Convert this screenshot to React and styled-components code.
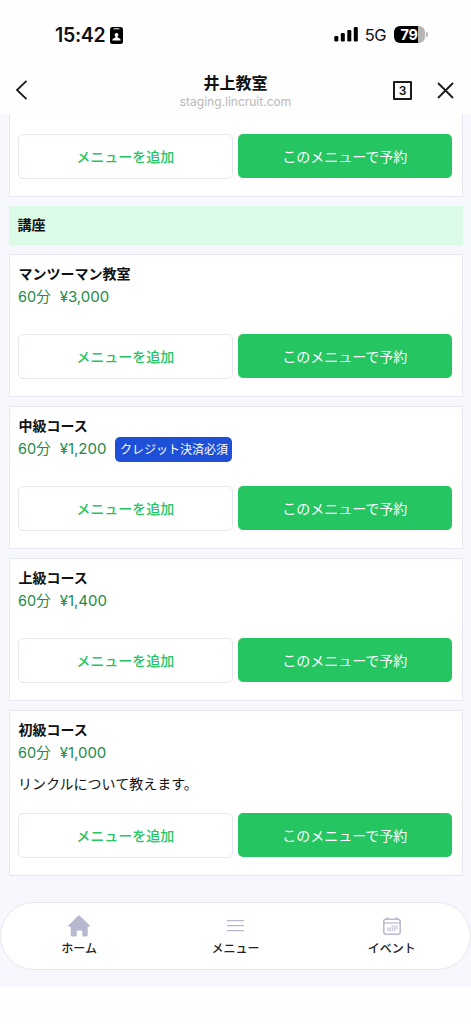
import styled, {createGlobalStyle} from 'styled-components';

const GlobalStyle = createGlobalStyle`
    * {
        box-sizing: border-box;
    }

    body {
        margin: 0;
        background-color: #fff;
        color: #111;
        font-family: Inter, 'Noto Sans CJK JP', sans-serif;
        -webkit-font-smoothing: antialiased;
    }

    h1, h2, h3, p {
        margin: 0;
    }

    button {
        font-family: inherit;
        cursor: pointer;
    }

    svg {
        display: block;
    }
`

const Screen = styled.div`
    display: flex;
    flex-direction: column;
    width: 471px;
    height: 1024px;
    overflow: hidden;
    background-color: #fefefe;
`

const StatusBar = styled.div`
    display: flex;
    align-items: center;
    justify-content: space-between;
    height: 68px;
    padding: 2px 43px 0 55px;
`

const StatusGroup = styled.div`
    display: flex;
    align-items: center;
    gap: ${props => props.$gap};
`

const Time = styled.span`
    font-size: 19.5px;
    font-weight: 600;
    line-height: 24px;
    letter-spacing: -0.3px;
`

const Network = styled.span`
    font-size: 16.5px;
    line-height: 24px;
    letter-spacing: -0.5px;
    margin-right: 1px;
`

const Battery = styled.div`
    display: flex;
    align-items: center;
    gap: 1px;
    margin-top: -1px;
`

const BatteryBody = styled.div`
    display: flex;
    align-items: center;
    justify-content: center;
    width: 31px;
    height: 17px;
    padding-right: 1px;
    border-radius: 6px;
    background: linear-gradient(to right, #000 79%, #b5b5b5 79%);
    color: #fff;
    font-size: 14.5px;
    font-weight: 700;
    line-height: 17px;
    letter-spacing: -0.4px;
`

const BatteryTip = styled.div`
    width: 2px;
    height: 5px;
    border-radius: 0 2px 2px 0;
    background-color: #b5b5b5;
`

const Header = styled.header`
    display: grid;
    grid-template-columns: 88px 1fr 88px;
    height: 46px;
`

const HeaderSide = styled.div`
    display: flex;
    align-items: center;
    justify-content: ${props => props.$end ? 'flex-end' : 'flex-start'};
    gap: 25px;
    padding: ${props => props.$end ? '0 17px 2px 0' : '0 0 2px 15px'};
`

const HeaderTitle = styled.div`
    text-align: center;
    padding-top: 4px;
`

const Title = styled.h1`
    font-size: 16px;
    font-weight: 700;
    line-height: 23px;
`

const Url = styled.p`
    color: #b9b9b9;
    font-size: 12px;
    line-height: 14px;
`

const TabCount = styled.div`
    width: 19px;
    height: 19px;
    border: 2px solid #1a1a1a;
    border-radius: 1px;
    font-size: 12px;
    font-weight: 600;
    line-height: 15px;
    text-align: center;
`

const Content = styled.main`
    display: flex;
    flex-direction: column;
    gap: 9px;
    height: 873px;
    padding: 0 8.5px 0 9px;
    background-color: #f7f8fd;
`

const Card = styled.section`
    display: flex;
    flex-direction: column;
    flex: none;
    height: ${props => props.$height};
    padding: 10px 9.5px 17px 8px;
    border: 1.5px solid #e6e7f0;
    border-top-width: ${props => props.$cut ? 0 : '1.5px'};
    background-color: #fff;
`

const Category = styled.h2`
    flex: none;
    height: 39px;
    padding-left: 8.5px;
    background-color: #dcfbe7;
    font-size: 14px;
    font-weight: 700;
    line-height: 38px;
`

const CardTitle = styled.h3`
    padding-left: 0.5px;
    font-size: 14px;
    font-weight: 700;
    line-height: 18px;
`

const Info = styled.div`
    display: flex;
    align-items: center;
    gap: 9px;
    height: 25px;
    margin-top: 2px;
    color: #238a46;
    font-size: 14.5px;
    white-space: nowrap;
`

const Duration = styled.span`
    line-height: 21px;
    padding-bottom: 2px;
`

const Price = styled.span`
    font-size: 15px;
    line-height: 21px;
    padding-bottom: 2px;
`

const Badge = styled.span`
    height: 25px;
    padding: 0 4.5px;
    border-radius: 5px;
    background-color: #1d4fd7;
    color: #fff;
    font-size: 12px;
    line-height: 25px;
`

const Description = styled.p`
    margin-top: 8px;
    font-size: 14px;
    line-height: 20px;
`

const Actions = styled.div`
    display: grid;
    grid-template-columns: 1fr 1fr;
    align-items: start;
    gap: 5px;
    margin-top: auto;
`

const Button = styled.button`
    height: ${props => props.$primary ? '44px' : '45px'};
    padding: 0 0 ${props => props.$primary ? '1px' : '2px'};
    border: ${props => props.$primary ? 'none' : '1.5px solid #e6e7f0'};
    border-radius: 5px;
    background-color: ${props => props.$primary ? '#25c561' : '#fff'};
    color: ${props => props.$primary ? '#fff' : '#25c561'};
    font-size: 14px;
    font-weight: ${props => props.$primary ? 400 : 500};
`

const Nav = styled.nav`
    display: grid;
    grid-template-columns: repeat(3, 1fr);
    flex: none;
    height: 68px;
    margin: 17px -8.5px 0 -9px;
    border: 1.5px solid #e6e7f0;
    border-radius: 34px;
    background-color: #fff;
`

const NavItem = styled.div`
    display: flex;
    flex-direction: column;
    align-items: center;
    padding-top: 11px;
    color: #222;
    font-size: 12px;
    font-weight: 500;
    line-height: 16px;
`

const NavIcon = styled.div`
    display: flex;
    align-items: center;
    justify-content: center;
    height: 23px;
    margin-bottom: 4px;
    color: #b6b8d0;
`

const menus = [
    {id: 1, name: 'マンツーマン教室', price: '¥3,000'},
    {id: 2, name: '中級コース', price: '¥1,200', badge: 'クレジット決済必須'},
    {id: 3, name: '上級コース', price: '¥1,400'},
    {id: 4, name: '初級コース', price: '¥1,000', text: 'リンクルについて教えます。'},
];

const IdIcon = () => (
    <svg width="13" height="17" viewBox="0 0 13 17">
        <rect width="13" height="17" rx="2.5" fill="#000" />
        <path d="M4 1.8h5" stroke="#fff" strokeWidth="1" strokeLinecap="round" />
        <circle cx="6.5" cy="7.8" r="1.9" fill="#fff" />
        <path d="M5.5 8.5h2v2c1.8.4 3 1.3 3.2 2.9H2.3c.2-1.6 1.4-2.5 3.2-2.9z" fill="#fff" />
    </svg>
)

const SignalIcon = () => (
    <svg width="24" height="16" viewBox="0 0 24 16">
        <rect x="0.3" y="9" width="4" height="5.5" rx="1.2" />
        <rect x="6.8" y="6" width="4" height="8.5" rx="1.2" />
        <rect x="13.3" y="3" width="4" height="11.5" rx="1.2" />
        <rect x="19.8" y="0" width="4" height="14.5" rx="1.2" />
    </svg>
)

const BackIcon = () => (
    <svg width="13" height="20" viewBox="0 0 13 20" fill="none" stroke="#1a1a1a" strokeWidth="1.8">
        <path d="M11.5 0.8L2 10l9.5 9.2" />
    </svg>
)

const CloseIcon = () => (
    <svg width="17" height="17" viewBox="0 0 17 17" fill="none" stroke="#1a1a1a" strokeWidth="1.8">
        <path d="M1 1l15 15M16 1L1 16" />
    </svg>
)

const HomeIcon = () => (
    <svg width="22" height="22" viewBox="0 0 22 22" fill="currentColor">
        <path d="M10.2.8a1.2 1.2 0 0 1 1.6 0l9.7 9.5c.6.7.2 1.5-.6 1.5h-1.2v8c0 1.1-.6 1.7-1.7 1.7h-2.7c-.6 0-1-.4-1-1v-4c0-.7-.4-1.1-1.1-1.1H9.800c-.7 0-1.100.4-1.100 1.100v4c0 .6-.4 1-1 1H4.500c-1.100 0-1.700-.6-1.700-1.700v-8H1.100c-.8 0-1.200-.8-.6-1.500z" />
    </svg>
)

const MenuIcon = () => (
    <svg width="17" height="12" viewBox="0 0 17 12" fill="none" stroke="currentColor" strokeWidth="1.3">
        <path d="M0 0.7h17M0 5.7h17M0 10.7h17" />
    </svg>
)

const CalendarIcon = () => (
    <svg width="18" height="18" viewBox="0 0 18 18" fill="none" stroke="currentColor">
        <rect x="0.8" y="2.3" width="16.4" height="14.9" rx="2.2" strokeWidth="1.5" />
        <path d="M1 6h16" strokeWidth="1.2" />
        <path d="M4.5 0v3M13.5 0v3" strokeWidth="1.3" />
        <path d="M5 10.5v4M7.2 10.5v4M9.4 8.5v6M11.6 8.5v6M13.8 8.5v4" strokeWidth="1.5" strokeDasharray="1.7 .3" opacity="0.8" />
    </svg>
)

const MenuActions = () => (
    <Actions>
        <Button type="button">メニューを追加</Button>
        <Button type="button" $primary>このメニューで予約</Button>
    </Actions>
)

const MenuCard = ({menu}) => (
    <Card $height={menu.text ? '166px' : '143px'}>
        <CardTitle>{menu.name}</CardTitle>
        <Info>
            <Duration>60分</Duration>
            <Price>{menu.price}</Price>
            {menu.badge && <Badge>{menu.badge}</Badge>}
        </Info>
        {menu.text && <Description>{menu.text}</Description>}
        <MenuActions />
    </Card>
)

const App = () => {
    return(
        <>
            <GlobalStyle />
            <Screen>
                <StatusBar>
                    <StatusGroup $gap="5px">
                        <Time>15:42</Time>
                        <IdIcon />
                    </StatusGroup>
                    <StatusGroup $gap="7px">
                        <SignalIcon />
                        <Network>5G</Network>
                        <Battery>
                            <BatteryBody>79</BatteryBody>
                            <BatteryTip />
                        </Battery>
                    </StatusGroup>
                </StatusBar>
                <Header>
                    <HeaderSide><BackIcon /></HeaderSide>
                    <HeaderTitle>
                        <Title>井上教室</Title>
                        <Url>staging.lincruit.com</Url>
                    </HeaderTitle>
                    <HeaderSide $end>
                        <TabCount>3</TabCount>
                        <CloseIcon />
                    </HeaderSide>
                </Header>
                <Content>
                    <Card $height="83px" $cut>
                        <MenuActions />
                    </Card>
                    <Category>講座</Category>
                    {menus.map(menu => <MenuCard key={menu.id} menu={menu} />)}
                    <Nav>
                        <NavItem><NavIcon><HomeIcon /></NavIcon>ホーム</NavItem>
                        <NavItem><NavIcon><MenuIcon /></NavIcon>メニュー</NavItem>
                        <NavItem><NavIcon><CalendarIcon /></NavIcon>イベント</NavItem>
                    </Nav>
                </Content>
            </Screen>
        </>
    )
}

export default App;
